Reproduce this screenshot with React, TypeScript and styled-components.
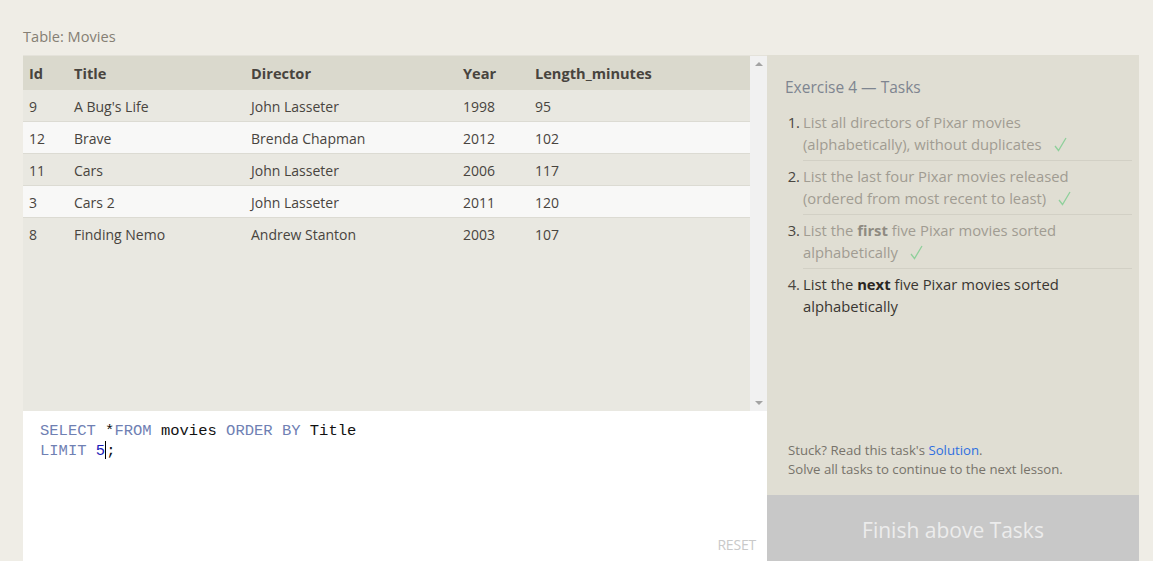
import React from "react";
import styled, { createGlobalStyle } from "styled-components";

const GlobalStyle = createGlobalStyle`
  html, body {
    margin: 0;
    padding: 0;
    background: #efede6;
    overflow: hidden;
  }
  body {
    font-family: "Open Sans", "Noto Sans", sans-serif;
  }
`;

const Page = styled.div`
  width: 1153px;
  height: 561px;
  box-sizing: border-box;
  padding: 26px 14px 0 23px;
  display: flex;
  flex-direction: column;
  overflow: hidden;
`;

const Caption = styled.div`
  font-size: 14.6px;
  line-height: 20px;
  height: 20px;
  color: #857f74;
  margin-bottom: 9px;
`;

const Main = styled.div`
  flex: 1;
  display: grid;
  grid-template-columns: 744px 372px;
  min-height: 0;
`;

const LeftColumn = styled.div`
  display: flex;
  flex-direction: column;
  min-height: 0;
`;

const TableArea = styled.div`
  height: 356px;
  display: flex;
  background: #e9e8e1;
  border-top: 1px solid #e4e2da;
  box-sizing: border-box;
`;

const TableScroll = styled.div`
  width: 727px;
  display: flex;
  flex-direction: column;
`;

const Row = styled.div<{ $variant: "head" | "odd" | "even"; $last?: boolean }>`
  display: grid;
  grid-template-columns: 45px 177px 212px 72px 1fr;
  height: ${(p) => (p.$variant === "head" ? "34px" : "32px")};
  box-sizing: border-box;
  align-items: center;
  padding-top: ${(p) => (p.$variant === "head" ? "0" : "1px")};
  background: ${(p) =>
    p.$variant === "head" ? "#dad9cd" : p.$variant === "even" ? "#f8f8f7" : "#e9e8e1"};
  border-bottom: ${(p) => (p.$variant === "head" || p.$last ? "none" : "1px solid #dcdbd3")};
  color: #48443e;
  font-size: ${(p) => (p.$variant === "head" ? "14.6px" : "14px")};
  font-weight: ${(p) => (p.$variant === "head" ? 700 : 400)};
`;

const Cell = styled.div`
  padding-left: 6px;
  white-space: nowrap;
`;

const Scrollbar = styled.div`
  width: 17px;
  background: #f1f1f1;
  display: flex;
  flex-direction: column;
  justify-content: space-between;
  align-items: center;
  padding: 6px 0 6px;
  box-sizing: border-box;
`;

const Arrow = styled.div<{ $down?: boolean }>`
  width: 0;
  height: 0;
  border-left: 4px solid transparent;
  border-right: 4px solid transparent;
  ${(p) =>
    p.$down
      ? "border-top: 4px solid #a3a3a3;"
      : "border-bottom: 4px solid #a3a3a3;"}
`;

const Editor = styled.div`
  flex: 1;
  background: #ffffff;
  display: flex;
  flex-direction: column;
`;

const Code = styled.div`
  flex: 1;
  padding: 10px 0 0 17px;
  font-family: "Liberation Mono", "DejaVu Sans Mono", monospace;
  font-size: 15.5px;
  line-height: 20px;
  color: #111;
  white-space: pre;
`;

const Keyword = styled.span`
  color: #6f80b3;
`;

const Num = styled.span`
  color: #1a1ab8;
`;

const Caret = styled.span`
  display: inline-block;
  width: 0;
  height: 18px;
  border-left: 1.5px solid #000;
  vertical-align: -4px;
`;

const ResetRow = styled.div`
  display: flex;
  justify-content: flex-end;
  padding: 0 11px 7px 0;
`;

const ResetButton = styled.span`
  font-size: 14px;
  line-height: 18px;
  color: #c9c9c9;
  letter-spacing: -0.2px;
`;

const RightPanel = styled.div`
  display: flex;
  flex-direction: column;
  background: #e0ded3;
`;

const TasksArea = styled.div`
  flex: 1;
  padding: 22px 7px 0 18px;
  display: flex;
  flex-direction: column;
`;

const Heading = styled.div`
  font-size: 15.5px;
  line-height: 20px;
  color: #7e8590;
  margin-bottom: 14px;
`;

const TaskList = styled.ol`
  list-style: none;
  margin: 0;
  padding: 0;
`;

const Task = styled.li<{ $first?: boolean }>`
  display: grid;
  grid-template-columns: 18px 1fr;
  padding-top: ${(p) => (p.$first ? "0" : "4px")};
  font-size: 14.8px;
  line-height: 22px;
`;

const TaskNum = styled.span`
  color: #4a4640;
  text-align: right;
  padding-right: 3px;
`;

const TaskBody = styled.div<{ $done?: boolean; $last?: boolean }>`
  color: ${(p) => (p.$done ? "#a09c92" : "#3a3631")};
  padding: 0 32px 5px 0;
  border-bottom: ${(p) => (p.$last ? "none" : "1px solid #d2d0c5")};
  b {
    font-weight: 700;
    color: ${(p) => (p.$done ? "#8f8b82" : "#2a2622")};
  }
`;

const Check = styled.svg`
  width: 13px;
  height: 15px;
  margin-left: 12px;
  vertical-align: -2px;
`;

const Footer = styled.div`
  padding: 0 0 16px 21px;
  font-size: 13.2px;
  line-height: 19px;
  color: #77736a;
`;

const Link = styled.a`
  color: #2f6fe0;
  text-decoration: none;
`;

const FinishButton = styled.div`
  height: 66px;
  background: #c8c8c8;
  color: #ececec;
  font-size: 21px;
  line-height: 70px;
  text-align: center;
`;

const movies = [
  { id: 9, title: "A Bug's Life", director: "John Lasseter", year: 1998, len: 95 },
  { id: 12, title: "Brave", director: "Brenda Chapman", year: 2012, len: 102 },
  { id: 11, title: "Cars", director: "John Lasseter", year: 2006, len: 117 },
  { id: 3, title: "Cars 2", director: "John Lasseter", year: 2011, len: 120 },
  { id: 8, title: "Finding Nemo", director: "Andrew Stanton", year: 2003, len: 107 },
];

const CheckMark = () => (
  <Check viewBox="0 0 13 15">
    <path d="M1 9 L4.5 13.5 L12 1" fill="none" stroke="#8fd09b" strokeWidth="1.3" />
  </Check>
);

export default function App() {
  return (
    <>
      <GlobalStyle />
      <Page>
        <Caption>Table: Movies</Caption>
        <Main>
          <LeftColumn>
            <TableArea>
              <TableScroll>
                <Row $variant="head">
                  <Cell>Id</Cell>
                  <Cell>Title</Cell>
                  <Cell>Director</Cell>
                  <Cell>Year</Cell>
                  <Cell>Length_minutes</Cell>
                </Row>
                {movies.map((m, i) => (
                  <Row
                    key={m.id}
                    $variant={i % 2 === 0 ? "odd" : "even"}
                    $last={i === movies.length - 1}
                  >
                    <Cell>{m.id}</Cell>
                    <Cell>{m.title}</Cell>
                    <Cell>{m.director}</Cell>
                    <Cell>{m.year}</Cell>
                    <Cell>{m.len}</Cell>
                  </Row>
                ))}
              </TableScroll>
              <Scrollbar>
                <Arrow />
                <Arrow $down />
              </Scrollbar>
            </TableArea>
            <Editor>
              <Code>
                <Keyword>SELECT</Keyword> *<Keyword>FROM</Keyword> movies{" "}
                <Keyword>ORDER</Keyword> <Keyword>BY</Keyword> Title
                {"\n"}
                <Keyword>LIMIT</Keyword> <Num>5</Num>
                <Caret />;
              </Code>
              <ResetRow>
                <ResetButton>RESET</ResetButton>
              </ResetRow>
            </Editor>
          </LeftColumn>
          <RightPanel>
            <TasksArea>
              <Heading>Exercise 4 — Tasks</Heading>
              <TaskList>
                <Task $first>
                  <TaskNum>1.</TaskNum>
                  <TaskBody $done>
                    List all directors of Pixar movies (alphabetically), without duplicates
                    <CheckMark />
                  </TaskBody>
                </Task>
                <Task>
                  <TaskNum>2.</TaskNum>
                  <TaskBody $done>
                    List the last four Pixar movies released (ordered from most recent to least)
                    <CheckMark />
                  </TaskBody>
                </Task>
                <Task>
                  <TaskNum>3.</TaskNum>
                  <TaskBody $done>
                    List the <b>first</b> five Pixar movies sorted alphabetically
                    <CheckMark />
                  </TaskBody>
                </Task>
                <Task>
                  <TaskNum>4.</TaskNum>
                  <TaskBody $last>
                    List the <b>next</b> five Pixar movies sorted alphabetically
                  </TaskBody>
                </Task>
              </TaskList>
            </TasksArea>
            <Footer>
              Stuck? Read this task's <Link href="#">Solution</Link>.
              <br />
              Solve all tasks to continue to the next lesson.
            </Footer>
            <FinishButton>Finish above Tasks</FinishButton>
          </RightPanel>
        </Main>
      </Page>
    </>
  );
}
